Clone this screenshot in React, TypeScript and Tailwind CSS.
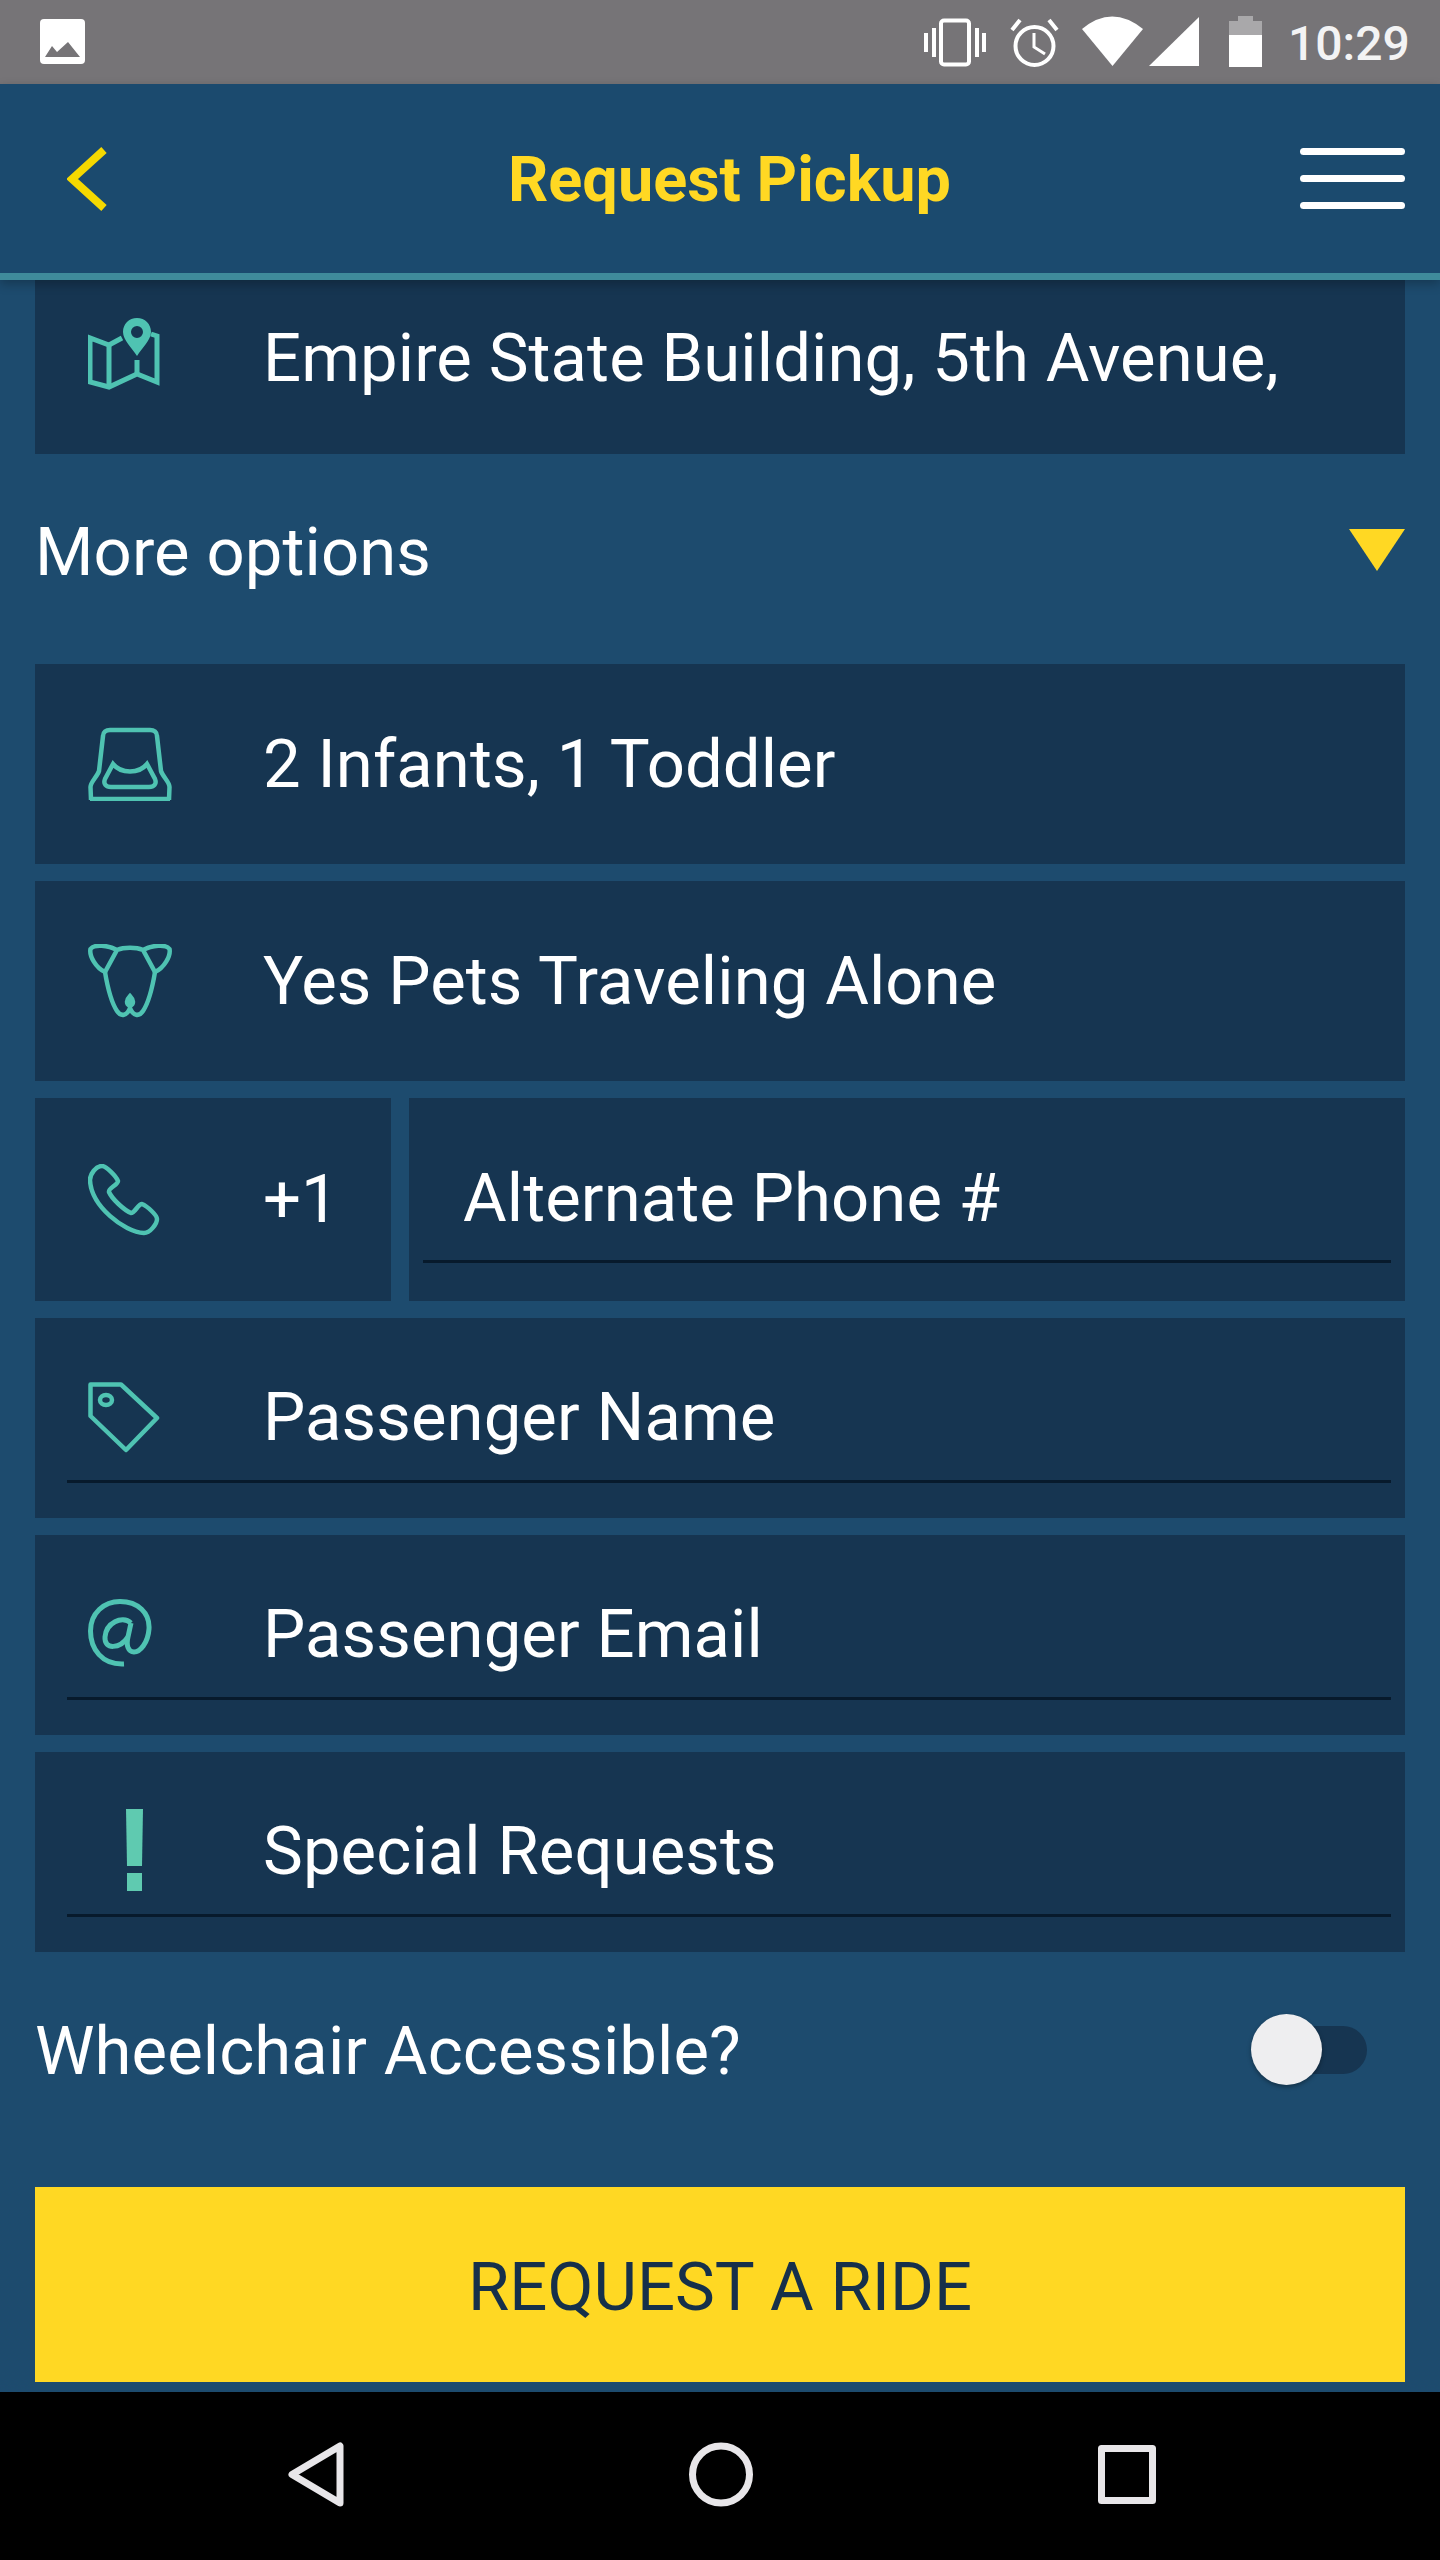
import type { ReactNode } from 'react';

const TEAL = '#4fc3b2';

function ImageIcon() {
  return (
    <svg width="45" height="45" viewBox="0 0 45 45">
      <rect width="45" height="45" rx="4" fill="#fff" />
      <path d="M5 38 L12 27 L17 33 L28 23 L40 38 Z" fill="#767477" />
    </svg>
  );
}

function StatusIcons() {
  return (
    <div className="flex items-start pt-[16px]">
      {/* vibrate */}
      <svg width="62" height="51" viewBox="0 0 62 51" className="mr-[24px]" fill="#fff">
        <rect x="0" y="17" width="4" height="19" />
        <rect x="8" y="12" width="4" height="29" />
        <rect x="17" y="4.5" width="28" height="44" rx="3" fill="none" stroke="#fff" strokeWidth="4" />
        <rect x="51" y="12" width="4" height="29" />
        <rect x="58" y="17" width="4" height="19" />
      </svg>
      {/* alarm */}
      <svg width="49" height="51" viewBox="0 0 49 51" className="mr-[23px]" fill="none" stroke="#fff" strokeWidth="4">
        <circle cx="24.5" cy="30" r="19" />
        <path d="M2 14 L10 4 M47 14 L39 4" />
        <path d="M24 17 V31 L35 38" strokeWidth="3" />
      </svg>
      {/* wifi */}
      <svg width="61" height="51" viewBox="0 0 61 51" className="mr-[6px]">
        <path d="M0 13 Q30 -12 61 13 L30.5 50 Z" fill="#fff" />
      </svg>
      {/* signal */}
      <svg width="50" height="51" viewBox="0 0 50 51" className="mr-[30px]">
        <path d="M0 50 L50 1 V50 Z" fill="#fff" />
      </svg>
      {/* battery */}
      <svg width="33" height="51" viewBox="0 0 33 51" className="mr-[26px]">
        <path d="M9 0 H24 V5 H33 V19 H0 V5 H9 Z" fill="#a9a8aa" />
        <rect y="19" width="33" height="32" fill="#fff" />
      </svg>
      <span className="text-[48px] leading-[50px] mt-[3px] font-medium text-[#f3f3f4] w-[121px] mr-[31px]">10:29</span>
    </div>
  );
}

function MapIcon() {
  return (
    <svg width="72" height="72" viewBox="0 0 72 72" fill="none" stroke={TEAL} strokeWidth="5">
      <path d="M34 20 L21 27 L2 20 V64 L21 69 L49 56 L69 64 V18 L63 16" />
      <path d="M21 27 V69 M49 42 V56" />
      <path fillRule="evenodd" fill={TEAL} stroke="none" d="M49 0 C57 0 63 6 63 14 C63 22 54 30 49 38 C44 30 35 22 35 14 C35 6 41 0 49 0 Z M49 8 A6 6 0 1 0 49 20 A6 6 0 1 0 49 8 Z" />
    </svg>
  );
}

function SeatIcon() {
  return (
    <svg width="84" height="74" viewBox="0 0 84 74" fill="none" stroke={TEAL} strokeWidth="4.5">
      <path d="M3 73 L2.5 60 C2.5 55 9 50 11 44 L15 9 C15 5 18 3 22 3 H62 C66 3 69 5 69 9 L73 44 C75 50 81.5 55 81.5 60 L81 73 M2 72 H82" />
      <path d="M25 37 C33 47 51 47 59 37 L67 52 C69 57 66 60 61 60 H23 C18 60 15 57 17 52 Z" />
    </svg>
  );
}

function DogIcon() {
  return (
    <svg width="84" height="74" viewBox="0 0 84 74" fill="none" stroke={TEAL} strokeWidth="4.5">
      <path d="M29 6 C20 1 6 0 2.5 5 C1 12 8 24 17 28 L29 6 C36 3 48 3 55 6 L67 28 C76 24 83 12 81.5 5 C78 0 64 1 55 6" />
      <path d="M17 28 C19 40 23 58 29 67 C33 73 39 72 42 64 C45 72 51 73 55 67 C61 58 65 40 67 28" />
      <path d="M42 52 C38 56 38 60 42 62 C46 60 46 56 42 52 Z" fill={TEAL} />
    </svg>
  );
}

function PhoneIcon() {
  return (
    <svg width="72" height="72" viewBox="0 0 72 72" fill="none" stroke={TEAL} strokeWidth="4.5" strokeLinejoin="round">
      <path d="M2 16 C2 10 8 2 14 2 C18 2 28 12 30 17 C30 21 20 24 21 28 C24 35 36 46 43 49 C47 49 50 40 54 40 C59 42 69 51 69 55 C69 60 62 69 56 69 C36 68 3 42 2 16 Z" />
    </svg>
  );
}

function TagIcon() {
  return (
    <svg width="72" height="72" viewBox="0 0 72 72" fill="none" stroke={TEAL} strokeWidth="4.5" strokeLinejoin="round" className="mt-[3px]">
      <path d="M2.5 2.5 H33 L69 36 L38 68 L2.5 34 Z" />
      <ellipse cx="18" cy="18" rx="6" ry="5" />
    </svg>
  );
}

function AtIcon() {
  return (
    <svg width="66" height="68" viewBox="0 0 66 68" fill="none" stroke={TEAL} strokeWidth="5">
      <path d="M36 65 C14 66 2.5 50 2.5 32 C2.5 14 16 2.5 32 2.5 C50 2.5 62 14 61 30 C60 44 52 53 46 53 C40 53 38 46 40 38 L43 24" />
      <path d="M43 24 C34 16 18 24 17 38 C16 51 32 50 40 38" />
    </svg>
  );
}

function BangIcon() {
  return (
    <svg width="72" height="84" viewBox="0 0 72 84" fill="#5fcab0" className="ml-[37px]">
      <path d="M1 1 H18 L17 58 H2 Z" />
      <rect x="2" y="65" width="15" height="18" />
    </svg>
  );
}

function Row({ icon, children }: { icon: ReactNode; children: ReactNode }) {
  return (
    <div className="h-[200px] bg-[#163551] flex items-center text-[67px] tracking-[0.1px] text-white">
      <div className="w-[175px] ml-[53px] shrink-0 flex items-center">{icon}</div>
      <span>{children}</span>
    </div>
  );
}

function InputRow({ icon, label }: { icon: ReactNode; label: string }) {
  return (
    <div className="h-[200px] bg-[#163551] pl-[32px] pr-[14px] text-[67px] tracking-[0.1px] text-white">
      <div className="h-[165px] pt-[34px] flex items-center border-b-[3px] border-[#071a2c]">
        <div className="w-[175px] ml-[21px] shrink-0 flex items-center">{icon}</div>
        <span className="mt-[2px]">{label}</span>
      </div>
    </div>
  );
}

export default function App() {
  return (
    <div className="w-[1440px] h-[2560px] overflow-hidden flex flex-col bg-[#1d4b6e] font-['Roboto',sans-serif]">
      {/* Status bar */}
      <div className="h-[84px] shrink-0 bg-[#767477] flex justify-between pl-[40px]">
        <div className="pt-[19px]">
          <ImageIcon />
        </div>
        <StatusIcons />
      </div>

      {/* Header */}
      <header className="h-[196px] shrink-0 relative z-10 bg-[#1b4a6e] border-b-[7px] border-[#3f8b9b] shadow-[0_4px_10px_rgba(0,0,0,0.25)] flex items-center pl-[67px] pr-[35px]">
        <svg width="40" height="64" viewBox="0 0 40 64" className="shrink-0" fill="none" stroke="#f5d800" strokeWidth="8">
          <path d="M37 3 L5 32 L37 61" />
        </svg>
        <h1 className="flex-1 pl-[52px] pt-[3px] text-center text-[63px] font-bold text-[#ffd823]">Request Pickup</h1>
        <div className="w-[105px] flex flex-col gap-[20px] shrink-0">
          <div className="h-[7px] rounded-sm bg-white" />
          <div className="h-[7px] rounded-sm bg-white" />
          <div className="h-[7px] rounded-sm bg-white" />
        </div>
      </header>

      {/* Form */}
      <main className="flex-1 px-[35px] flex flex-col">
        <div className="h-[174px] shrink-0 bg-[#163551] flex items-center pb-[22px] text-[67px] tracking-[0.1px] text-white">
          <div className="w-[175px] ml-[53px] mb-[4px] shrink-0 flex items-center">
            <MapIcon />
          </div>
          <span className="whitespace-nowrap mt-[4px]">Empire State Building, 5th Avenue,</span>
        </div>

        <div className="h-[210px] shrink-0 flex items-center justify-between pb-[14px] text-[67px] tracking-[0.1px] text-white">
          <span>More options</span>
          <svg width="56" height="42" viewBox="0 0 56 42" className="mb-[4px]">
            <path d="M0 0 H56 L28 42 Z" fill="#ffd823" />
          </svg>
        </div>

        <div className="flex flex-col gap-[17px]">
          <Row icon={<SeatIcon />}>2 Infants, 1 Toddler</Row>
          <Row icon={<DogIcon />}>Yes Pets Traveling Alone</Row>

          <div className="h-[203px] flex gap-[18px] text-[67px] tracking-[0.1px] text-white">
            <div className="w-[356px] bg-[#163551] flex items-center">
              <div className="w-[175px] ml-[53px] shrink-0 flex items-center">
                <PhoneIcon />
              </div>
              <span>+1</span>
            </div>
            <div className="flex-1 bg-[#163551] pl-[14px] pr-[14px]">
              <div className="h-[165px] pt-[38px] pl-[40px] flex items-center border-b-[3px] border-[#071a2c]">
                Alternate Phone #
              </div>
            </div>
          </div>

          <InputRow icon={<TagIcon />} label="Passenger Name" />
          <InputRow icon={<AtIcon />} label="Passenger Email" />
          <InputRow icon={<BangIcon />} label="Special Requests" />
        </div>

        <div className="h-[235px] shrink-0 flex items-center justify-between pb-[40px] text-[67px] tracking-[0.1px] text-white">
          <span className="mt-[4px]">Wheelchair Accessible?</span>
          <div className="relative w-[97px] h-[48px] mr-[38px] rounded-full bg-[#163551]">
            <div className="absolute -left-[19px] -top-[12px] w-[71px] h-[71px] rounded-full bg-[#eeeef0] shadow-[0_2px_4px_rgba(0,0,0,0.35)]" />
          </div>
        </div>

        <button className="h-[195px] shrink-0 bg-[#ffd823] pt-[6px] text-[67px] text-[#16304a]">REQUEST A RIDE</button>
      </main>

      {/* Nav bar */}
      <nav className="h-[168px] mt-[10px] shrink-0 bg-black flex items-center pb-[3px] pl-[288px]">
        <svg width="56" height="65" viewBox="0 0 56 65" fill="none" stroke="#e8e6e9" strokeWidth="7" strokeLinejoin="round">
          <path d="M52 4 V61 L4 32.5 Z" />
        </svg>
        <svg width="64" height="65" viewBox="0 0 64 65" fill="none" stroke="#e8e6e9" strokeWidth="7" className="ml-[345px]">
          <circle cx="32" cy="32.5" r="28.5" />
        </svg>
        <svg width="58" height="59" viewBox="0 0 58 59" fill="none" stroke="#e8e6e9" strokeWidth="7" strokeLinejoin="round" className="ml-[345px]">
          <rect x="3.5" y="3.5" width="51" height="52" />
        </svg>
      </nav>
    </div>
  );
}
